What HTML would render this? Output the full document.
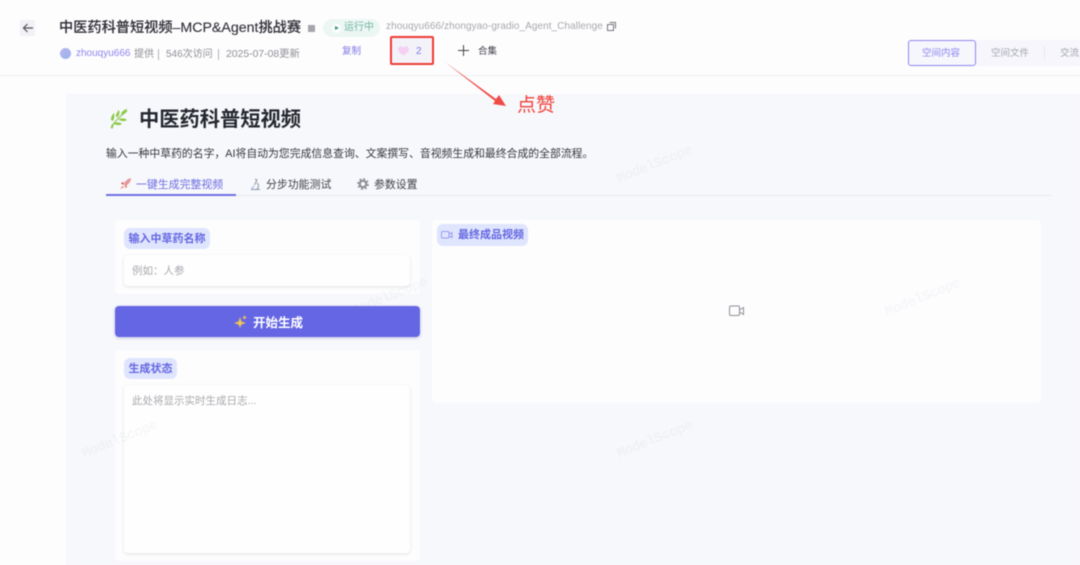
<!DOCTYPE html>
<html lang="zh">
<head>
<meta charset="utf-8">
<title>中医药科普短视频</title>
<style>
html,body{margin:0;padding:0}
body{width:1080px;height:565px;overflow:hidden;background:#fdfdfe;position:relative;font-family:"Liberation Sans","Noto Sans CJK SC",sans-serif;color:#333}
.a{position:absolute;white-space:nowrap}
#wrap{position:absolute;left:0;top:0;width:1080px;height:565px;overflow:hidden;filter:blur(.4px)}
.card{position:absolute;background:#fdfdfe;border-radius:4px}
.inp{position:absolute;background:#fefefe;border-radius:4px;box-shadow:0 1px 3px rgba(30,30,60,.12)}
.lab{position:absolute;background:#e0e5fe;border-radius:6px;color:#6366e0;font-weight:bold;font-size:11px;line-height:22px;height:21px;white-space:nowrap}
.wm{position:absolute;width:100px;text-align:center;font-size:14px;font-weight:bold;color:rgba(120,130,155,.06);transform:translate(-50%,-50%) rotate(-22deg);font-family:"Liberation Mono",monospace;letter-spacing:-.4px;white-space:nowrap}
</style>
</head>
<body>
<div id="wrap">
<!-- header -->
<div class="a" style="left:0;top:75px;width:1080px;height:1px;background:#efeff2"></div>
<div class="a" style="left:20px;top:20px;width:15px;height:16px;background:#f1f1f6;border-radius:2px"></div>
<svg class="a" style="left:21px;top:21px" width="14" height="14" viewBox="0 0 14 14" fill="none" stroke="#555" stroke-width="1.2"><path d="M12 7H2.5M6.5 3 2.5 7l4 4"/></svg>
<div class="a" style="left:59px;top:18px;font-size:14.2px;line-height:20px;font-weight:500;color:#2c2c34;-webkit-text-stroke:.1px #2c2c34">中医药科普短视频–MCP&amp;Agent挑战赛</div>
<div class="a" style="left:308px;top:25px;width:7px;height:7px;background:#a5a5aa"></div>
<div class="a" style="left:323px;top:19px;width:57px;height:18px;border-radius:9px;background:#ecf7f4"></div>
<div class="a" style="left:322px;top:22px;width:19px;height:13px"><div style="position:absolute;left:10px;top:2px;width:9px;height:9px;border-radius:50%;background:#fff"></div><div style="position:absolute;left:13px;top:4px;border-left:4px solid #3a9a80;border-top:2.5px solid transparent;border-bottom:2.5px solid transparent"></div></div>
<div class="a" style="left:344px;top:21px;font-size:10px;line-height:14px;color:#73b5a2">运行中</div>
<div class="a" style="left:386px;top:20px;font-size:9.95px;line-height:14px;color:#a8a8ae;letter-spacing:.1px">zhouqyu666/zhongyao-gradio_Agent_Challenge</div>
<svg class="a" style="left:607px;top:22px" width="9" height="9" viewBox="0 0 9 9" fill="none" stroke="#77777f" stroke-width="1"><rect x=".5" y="2.5" width="6" height="6"/><path d="M2.5 .5h6v6"/></svg>
<div class="a" style="left:60px;top:48px;width:11px;height:11px;border-radius:50%;background:linear-gradient(135deg,#b9b5ee,#9ab2ec)"></div>
<div class="a" style="left:76px;top:47px;font-size:10px;line-height:14px;color:#8f86ec">zhouqyu666</div>
<div class="a" style="left:134px;top:48px;font-size:10px;line-height:14px;color:#909097">提供</div>
<div class="a" style="left:158px;top:49px;width:1px;height:11px;background:#b4b4ba"></div>
<div class="a" style="left:166px;top:48px;font-size:10px;line-height:14px;color:#909097">546次访问</div>
<div class="a" style="left:218px;top:49px;width:1px;height:11px;background:#b4b4ba"></div>
<div class="a" style="left:226px;top:48px;font-size:10.4px;line-height:14px;color:#909097">2025-07-08更新</div>
<div class="a" style="left:342px;top:45px;font-size:9.5px;line-height:14px;color:#7f78e6">复制</div>
<div class="a" style="left:390px;top:36px;width:40px;height:25px;background:#f2f2f8;border:2px solid #ee3b35;border-radius:2px"></div>
<svg class="a" style="left:398px;top:46px" width="11" height="10" viewBox="0 0 11 10"><path d="M5.5 9.5C1 6.5.2 4.8.2 3.2.2 1.5 1.5.4 3 .4c1.1 0 2 .6 2.5 1.5C6 1 6.9.4 8 .4c1.500 0 2.800 1.100 2.800 2.800 0 1.600-.8 3.300-5.300 6.300z" fill="#f6d0f4"/></svg>
<div class="a" style="left:416px;top:45px;font-size:10px;line-height:14px;color:#7f78e6">2</div>
<svg class="a" style="left:458px;top:45px" width="11" height="11" viewBox="0 0 11 11" stroke="#444" stroke-width="1"><path d="M5.5 0v11M0 5.5h11"/></svg>
<div class="a" style="left:478px;top:45px;font-size:9.5px;line-height:14px;color:#3c3c44">合集</div>
<!-- tabs right -->
<div class="a" style="left:976px;top:40px;width:104px;height:26px;background:#f6f6fc"></div>
<div class="a" style="left:908px;top:40px;width:66px;height:24px;border:1px solid #8f85ee;border-radius:3px;background:#f6f6fd"></div>
<div class="a" style="left:922px;top:47px;font-size:9.5px;line-height:14px;color:#8d83ee">空间内容</div>
<div class="a" style="left:991px;top:47px;font-size:9.5px;line-height:14px;color:#a5a5ad">空间文件</div>
<div class="a" style="left:1044px;top:46px;width:1px;height:13px;background:#e6e6ee"></div>
<div class="a" style="left:1060px;top:47px;font-size:9.5px;line-height:14px;color:#a5a5ad">交流反馈</div>
<!-- main -->
<div class="a" style="left:66px;top:94px;width:1014px;height:471px;background:#f7f8fb"></div>
<!-- leaf -->
<svg class="a" style="left:109px;top:108px" width="21" height="22" viewBox="0 0 21 22"><path d="M2 20C5 14 10 9 18 3" stroke="#7fbb3c" stroke-width="1" fill="none"/><path d="M2 12c0-3 1-5 3-7 1 3 0 6-1 8zM7 9c0-3 1-5 3-7 1 3 0 5-1 7zM12 6c1-2 2-4 6-5 0 3-2 5-5 6zM5 15c3-1 6-1 8 1-3 2-6 1-8 0zM10 11c3-1 6-1 8 1-3 2-6 1-8 0zM3 16c-1 2-1 3 0 5 1-1 2-3 1-5z" fill="#8ccb47"/></svg>
<div class="a" style="left:139px;top:107px;font-size:20.25px;line-height:26px;font-weight:bold;color:#24272f">中医药科普短视频</div>
<div class="a" style="left:106px;top:147px;font-size:10.85px;line-height:15px;color:#33363e">输入一种中草药的名字，AI将自动为您完成信息查询、文案撰写、音视频生成和最终合成的全部流程。</div>
<!-- tabs -->
<div class="a" style="left:106px;top:195px;width:946px;height:1px;background:#e9eaee"></div>
<div class="a" style="left:106px;top:194px;width:130px;height:2px;background:#6f6fe4"></div>
<svg class="a" style="left:119px;top:177px" width="13" height="13" viewBox="0 0 13 13"><path d="M5 8C5 5 8 2 12 1c0 4-3 7-6 8z" fill="#e5989b"/><path d="M2 6l3-1-1 3zM6 11l1-3 1 2z" fill="#d9453f"/><path d="M1 12l3-3 1 1z" fill="#e8613c"/></svg>
<div class="a" style="left:136px;top:178px;font-size:10.9px;line-height:15px;color:#6b6be2">一键生成完整视频</div>
<svg class="a" style="left:249px;top:178px" width="13" height="13" viewBox="0 0 13 13" fill="none" stroke="#8b97a8" stroke-width="1"><path d="M6 1l2 1-2.5 5M2 11.5h9M8 5c2 1.5 2 4.5 0 6"/><path d="M2 11.5 5 8" stroke="#9bb6dc"/></svg>
<div class="a" style="left:266px;top:178px;font-size:10.9px;line-height:15px;color:#3c3f47">分步功能测试</div>
<svg class="a" style="left:357px;top:178px" width="12" height="12" viewBox="0 0 12 12"><circle cx="6" cy="6" r="3.2" fill="none" stroke="#8c8a94" stroke-width="2"/><circle cx="6" cy="6" r="5" fill="none" stroke="#8c8a94" stroke-width="1.6" stroke-dasharray="2 1.93"/></svg>
<div class="a" style="left:374px;top:178px;font-size:10.9px;line-height:15px;color:#3c3f47">参数设置</div>
<!-- left card -->
<div class="card" style="left:115px;top:220px;width:305px;height:74px"></div>
<div class="lab" style="left:124px;top:228px;width:86px;text-align:center">输入中草药名称</div>
<div class="inp" style="left:124px;top:255px;width:286px;height:31px"></div>
<div class="a" style="left:132px;top:264px;font-size:10.5px;line-height:15px;color:#a9a9af">例如：人参</div>
<!-- button -->
<div class="a" style="left:115px;top:306px;width:305px;height:31px;background:#6466e4;border-radius:4px;box-shadow:0 1px 3px rgba(80,80,180,.3)"></div>
<svg class="a" style="left:234px;top:315px" width="13" height="13" viewBox="0 0 13 13" fill="#eec25c"><path d="M6 2 7.5 6.5 12 8 7.500 9.500 6 13 4.500 9.500 0 8 4.500 6.500zM10.500 0l.7 1.800 1.800.7-1.800.7-.7 1.800-.7-1.800L8 2.500l1.800-.7z"/></svg>
<div class="a" style="left:253px;top:315px;font-size:12.5px;line-height:16px;font-weight:bold;color:#fff">开始生成</div>
<!-- status card -->
<div class="card" style="left:115px;top:350px;width:305px;height:211px"></div>
<div class="lab" style="left:124px;top:358px;width:53px;text-align:center">生成状态</div>
<div class="inp" style="left:124px;top:385px;width:286px;height:168px"></div>
<div class="a" style="left:132px;top:394px;font-size:10.5px;line-height:15px;color:#a9a9af">此处将显示实时生成日志...</div>
<!-- right card -->
<div class="card" style="left:432px;top:220px;width:609px;height:183px"></div>
<div class="lab" style="left:437px;top:224px;width:91px;height:22px;line-height:22px"><span style="position:absolute;left:21px">最终成品视频</span></div>
<svg class="a" style="left:441px;top:230px" width="12" height="10" viewBox="0 0 12 10" fill="none" stroke="#9a9cea" stroke-width="1"><rect x=".5" y="1.5" width="7.5" height="6.5" rx="1"/><path d="M8 4l3-1.500v5L8 6"/></svg>
<svg class="a" style="left:729px;top:305px" width="16" height="12" viewBox="0 0 16 12" fill="none" stroke="#8f8f96" stroke-width="1"><rect x=".5" y="1" width="10" height="9.500" rx="1.500"/><path d="M10.500 5l4-2.500v7l-4-2.500z"/></svg>
<!-- watermarks -->
<div class="wm" style="left:655px;top:165px">ModelScope</div>
<div class="wm" style="left:390px;top:297px">ModelScope</div>
<div class="wm" style="left:923px;top:298px">ModelScope</div>
<div class="wm" style="left:120px;top:440px">ModelScope</div>
<div class="wm" style="left:655px;top:440px">ModelScope</div>
<!-- annotation -->
<svg class="a" style="left:440px;top:58px" width="70" height="52" viewBox="0 0 70 52"><path d="M5 4 56 41 59 37 66 48 53 46 55 43Z" fill="#f04a45"/></svg>
<div class="a" style="left:517px;top:95px;font-size:19px;line-height:22px;color:#f0403a">点赞</div>
</div>
</body>
</html>
